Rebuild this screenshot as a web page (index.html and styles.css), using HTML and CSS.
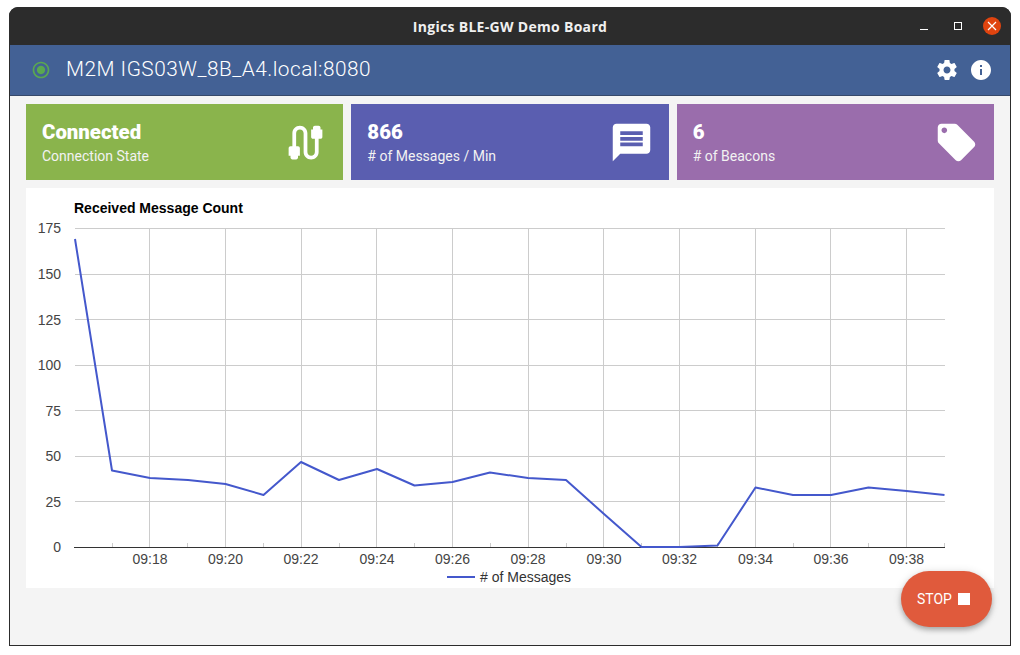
FILE: index.html
```html
<!DOCTYPE html>
<html lang="en">
<head>
<meta charset="utf-8">
<title>Ingics BLE-GW Demo Board</title>
<link rel="stylesheet" href="styles.css">
</head>
<body>
<div class="window">
  <div class="titlebar">
    <span class="title">Ingics BLE-GW Demo Board</span>
    <div class="controls">
      <span class="ctl-min"></span>
      <span class="ctl-max"></span>
      <span class="ctl-close">
        <svg viewBox="0 0 10 10" width="10" height="10"><path d="M1 1L9 9M9 1L1 9" stroke="#fff" stroke-width="1.2" fill="none"/></svg>
      </span>
    </div>
  </div>
  <div class="app">
    <header class="appbar">
      <svg class="status" viewBox="0 0 24 24" width="20" height="20"><path d="M12 7c-2.76 0-5 2.24-5 5s2.24 5 5 5 5-2.24 5-5-2.24-5-5-5zm0-5C6.48 2 2 6.48 2 12s4.48 10 10 10 10-4.48 10-10S17.52 2 12 2zm0 18c-4.42 0-8-3.58-8-8s3.58-8 8-8 8 3.58 8 8-3.58 8-8 8z"/></svg>
      <span class="host">M2M IGS03W_8B_A4.local:8080</span>
      <div class="appbar-icons">
        <svg viewBox="0 0 24 24" width="24" height="24"><path d="M19.43 12.98c.04-.32.07-.64.07-.98s-.03-.66-.07-.98l2.11-1.65c.19-.15.24-.42.12-.64l-2-3.46c-.12-.22-.39-.3-.61-.22l-2.49 1c-.52-.4-1.08-.73-1.69-.98l-.38-2.65C14.46 2.18 14.25 2 14 2h-4c-.25 0-.46.18-.49.42l-.38 2.65c-.61.25-1.17.59-1.69.98l-2.49-1c-.23-.09-.49 0-.61.22l-2 3.46c-.13.22-.07.49.12.64l2.11 1.65c-.04.32-.07.65-.07.98s.03.66.07.98l-2.11 1.65c-.19.15-.24.42-.12.64l2 3.46c.12.22.39.3.61.22l2.49-1c.52.4 1.08.73 1.69.98l.38 2.65c.03.24.24.42.49.42h4c.25 0 .46-.18.49-.42l.38-2.65c.61-.25 1.17-.59 1.69-.98l2.49 1c.23.09.49 0 .61-.22l2-3.46c.12-.22.07-.49-.12-.64l-2.11-1.65zM12 15.5c-1.93 0-3.5-1.57-3.5-3.5s1.57-3.5 3.5-3.5 3.5 1.57 3.5 3.5-1.57 3.5-3.5 3.5z"/></svg>
        <svg viewBox="0 0 24 24" width="24" height="24"><path d="M12 2C6.48 2 2 6.48 2 12s4.48 10 10 10 10-4.48 10-10S17.52 2 12 2zm1 15h-2v-6h2v6zm0-8h-2V7h2v2z"/></svg>
      </div>
    </header>
    <main class="content">
      <section class="cards">
        <div class="card card-green">
          <div class="card-text"><div class="card-value">Connected</div><div class="card-label">Connection State</div></div>
          <svg class="card-icon" viewBox="0 0 24 24"><path d="M20,5V4c0-0.55-0.45-1-1-1h-2c-0.55,0-1,0.45-1,1v1h-1v4c0,0.55,0.45,1,1,1h1v7c0,1.1-0.9,2-2,2s-2-0.9-2-2V7c0-2.21-1.79-4-4-4S5,4.79,5,7v7H4c-0.55,0-1,0.45-1,1v4h1v1c0,0.55,0.45,1,1,1h2c0.55,0,1-0.45,1-1v-1h1v-4c0-0.55-0.45-1-1-1H7V7c0-1.1,0.9-2,2-2s2,0.9,2,2v10c0,2.21,1.79,4,4,4s4-1.79,4-4v-7h1c0.55,0,1-0.45,1-1V5H20z"/></svg>
        </div>
        <div class="card card-indigo">
          <div class="card-text"><div class="card-value">866</div><div class="card-label"># of Messages / Min</div></div>
          <svg class="card-icon" viewBox="0 0 24 24"><path d="M20 2H4c-1.1 0-1.99.9-1.99 2L2 22l4-4h14c1.1 0 2-.9 2-2V4c0-1.1-.9-2-2-2zm-2 12H6v-2h12v2zm0-3H6V9h12v2zm0-3H6V6h12v2z"/></svg>
        </div>
        <div class="card card-purple">
          <div class="card-text"><div class="card-value">6</div><div class="card-label"># of Beacons</div></div>
          <svg class="card-icon" viewBox="0 0 24 24"><path d="M21.41 11.58l-9-9C12.05 2.22 11.55 2 11 2H4c-1.1 0-2 .9-2 2v7c0 .55.22 1.05.59 1.42l9 9c.36.36.86.58 1.41.58.55 0 1.05-.22 1.41-.59l7-7c.37-.36.59-.86.59-1.41 0-.55-.23-1.06-.59-1.42zM5.5 7C4.67 7 4 6.33 4 5.5S4.67 4 5.5 4 7 4.67 7 5.5 6.33 7 5.5 7z"/></svg>
        </div>
      </section>
      <section class="chart-card">
        <svg class="chart" viewBox="26 188 968 400" width="968" height="400">
          <text class="chart-title" x="74" y="213">Received Message Count</text>
          <g class="grid">
            <path d="M75 228.5H945M75 274.5H945M75 319.5H945M75 365.5H945M75 410.5H945M75 456.5H945M75 501.5H945"/>
            <path d="M149.5 228V547M225.5 228V547M301.5 228V547M376.5 228V547M452.5 228V547M528.5 228V547M603.5 228V547M679.5 228V547M755.5 228V547M830.5 228V547M906.5 228V547"/>
            <path d="M112.5 543V547M187.5 543V547M263.5 543V547M339.5 543V547M414.5 543V547M490.5 543V547M566.5 543V547M641.5 543V547M717.5 543V547M793.5 543V547M868.5 543V547M944.5 543V547"/>
          </g>
          <path class="axis" d="M74 547.5H945"/>
          <g class="ylabels">
            <text x="61" y="233">175</text><text x="61" y="279">150</text><text x="61" y="325">125</text><text x="61" y="370">100</text><text x="61" y="416">75</text><text x="61" y="461">50</text><text x="61" y="507">25</text><text x="61" y="552">0</text>
          </g>
          <g class="xlabels">
            <text x="150" y="564">09:18</text><text x="225.5" y="564">09:20</text><text x="301" y="564">09:22</text><text x="377" y="564">09:24</text><text x="452.5" y="564">09:26</text><text x="528" y="564">09:28</text><text x="604" y="564">09:30</text><text x="679.5" y="564">09:32</text><text x="755.5" y="564">09:34</text><text x="831" y="564">09:36</text><text x="906.5" y="564">09:38</text>
          </g>
          <polyline class="line" points="75,239 112,470.5 150,478 188,480 225.5,484 263.5,495 301,462 339,480 377,469 414.5,485.5 452.5,482 490,472.5 528,478 566,480 604,514 641.5,547 679.5,547 717.5,545.5 755.5,487.5 793,495 831,495 868.5,487.5 906.5,491 944.5,495"/>
          <path class="line" d="M447 577H475"/>
          <text class="legend" x="480" y="582">
# of Messages</text>
        </svg>
      </section>
    </main>
    <button class="fab" type="button">STOP<span class="fab-square"></span></button>
  </div>
</div>
</body>
</html>
```
FILE: styles.css
```css
* { box-sizing: border-box; }
html, body { margin: 0; height: 100%; background: #fff; overflow: hidden; }
body { padding: 7px 9px 9px; font-family: Roboto, "Liberation Sans", sans-serif; }
.window {
  height: 639px;
  display: flex;
  flex-direction: column;
  border-radius: 9px 9px 0 0;
  overflow: hidden;
  background: #2c2c2c;
}
.titlebar {
  flex: 0 0 38px;
  position: relative;
  display: flex;
  align-items: center;
  justify-content: center;
  background: #2c2c2c;
}
.title {
  color: #f0f0f0;
  font: bold 14px "Open Sans", "Noto Sans", sans-serif;
  letter-spacing: 0.3px;
}
.controls {
  position: absolute;
  top: 10px;
  right: 10px;
  display: flex;
  align-items: center;
}
.ctl-min { width: 8px; height: 1px; margin-right: 26px; margin-top: 6px; background: #fff; }
.ctl-max { width: 8px; height: 8px; margin-right: 21px; border: 1px solid #fff; }
.ctl-close {
  width: 18px;
  height: 18px;
  border-radius: 50%;
  background: #e0440f;
  display: flex;
  align-items: center;
  justify-content: center;
}
.app {
  flex: 1;
  position: relative;
  display: flex;
  flex-direction: column;
  margin: 0 1px 1px;
  background: #f4f4f4;
}
.appbar {
  flex: 0 0 51px;
  display: flex;
  align-items: center;
  padding: 0 17px 0 21px;
  background: #436195;
  border-bottom: 1px solid #37496a;
  color: #fff;
}
.status { fill: #5aa850; margin-right: 15px; }
.host { font-size: 20.8px; font-weight: 300; letter-spacing: 0.5px; padding-bottom: 2px; color: #fff; }
.appbar-icons { margin-left: auto; display: flex; gap: 10px; }
.appbar-icons svg { fill: #fff; display: block; }
.content { flex: 1; padding: 8px 16px 0; display: flex; flex-direction: column; gap: 8px; }
.cards { display: flex; gap: 8px; }
.card {
  flex: 1;
  height: 76px;
  display: flex;
  align-items: center;
  justify-content: space-between;
  padding: 0 16px;
  color: #fff;
}
.card-green { background: #8ab44c; }
.card-indigo { background: #5a5eb0; }
.card-purple { background: #9a6dac; }
.card-text { padding-top: 2px; }
.card-value { font-size: 20.4px; font-weight: 900; line-height: 24px; margin-bottom: 2px; }
.card-label { font-size: 14px; line-height: 20px; color: #f2f2f2; }
.card-icon { width: 45px; height: 45px; fill: #fff; margin-right: -1px; }
.chart-card { height: 400px; background: #fff; }
.chart { display: block; font-family: "Liberation Sans", Arial, sans-serif; }
.chart-title { font-size: 14px; font-weight: bold; fill: #000; }
.grid path { stroke: #ccc; stroke-width: 1; fill: none; }
.axis { stroke: #333; stroke-width: 1; fill: none; }
.ylabels text { font-size: 14px; fill: #444; text-anchor: end; }
.xlabels text { font-size: 14px; fill: #444; text-anchor: middle; }
.line { stroke: #4458cc; stroke-width: 2; fill: none; stroke-linejoin: round; }
.legend { font-size: 14px; fill: #333; }
.fab {
  position: absolute;
  left: 891px;
  top: 526px;
  width: 91px;
  height: 56px;
  padding: 0 6px 0 0;
  border: 0;
  border-radius: 28px;
  background: #e05a3c;
  color: #fff;
  font: 14px Roboto, sans-serif;
  display: flex;
  align-items: center;
  justify-content: center;
  gap: 6px;
  box-shadow: 0 3px 5px rgba(0,0,0,.25), 0 1px 10px rgba(0,0,0,.12);
}
.fab-square { width: 12px; height: 12px; background: #fff; }
```
